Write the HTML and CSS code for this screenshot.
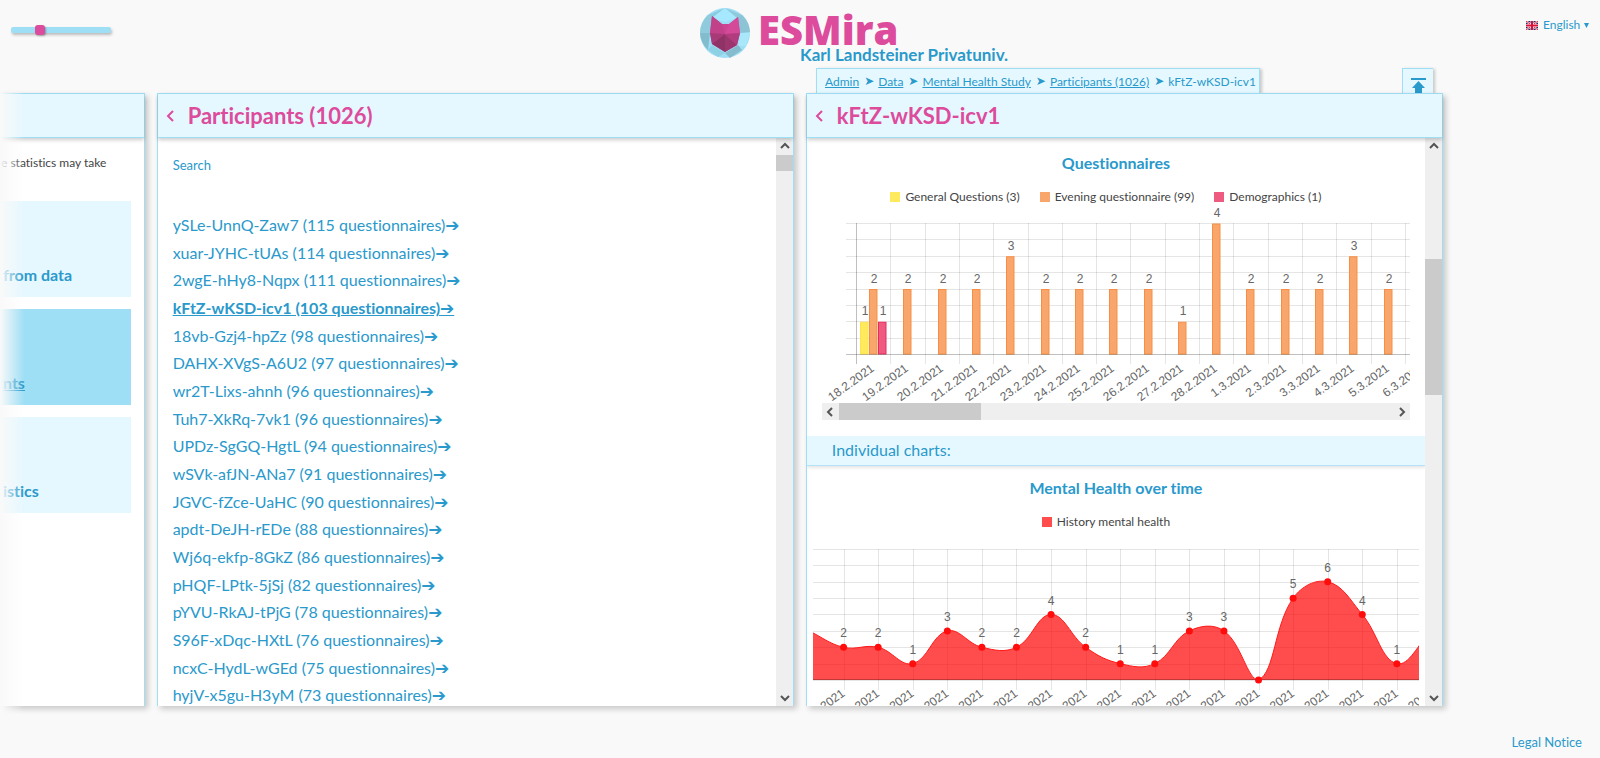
FILE: index.html
```html
<!DOCTYPE html>
<html lang="en">
<head>
<meta charset="utf-8">
<title>ESMira</title>
<link rel="stylesheet" href="styles.css">
</head>
<body>
<header class="top">
  <input class="zoom-slider" type="range" min="0" max="100" value="27" aria-label="Position">
  <div class="brand">
    <svg class="brand-icon" viewBox="0 0 50 50" aria-hidden="true">
      <circle cx="25" cy="25" r="25" fill="#9fdff5"/>
      <path d="M25 0 8 7 12 10z" fill="#8accdf"/>
      <path d="M25 0 42 7 37 13z" fill="#8fc9dc"/>
      <path d="M8 7A25 25 0 0 0 0 25L10 25 12 10z" fill="#8fcbdd"/>
      <path d="M42 7A25 25 0 0 1 50 24L40 25 38 10z" fill="#8cc4d6"/>
      <path d="M0 25 10 25 8 42A25 25 0 0 1 0 25z" fill="#83bccd"/>
      <path d="M50 25 40 25 38 38 46 38z" fill="#a9e8fb"/>
      <path d="M8 42 12 37 25 45 18 49z" fill="#8ed0e4"/>
      <path d="M42 42 38 37 25 45 30 50z" fill="#86bdce"/>
      <path d="M12 10 25 14 37 10 25 0z" fill="#a6e8fd"/>
      <path d="M12 8 22 16H29L38 9 40 25 37 37 25 44 12 36 10 25z" fill="#cb4592"/>
      <path d="M12 8 22 16 25 26 10 25z" fill="#c24289"/>
      <path d="M38 9 40 25 25 26 29 16z" fill="#d44a99"/>
      <path d="M10 25 25 26 12 36z" fill="#a83a78"/>
      <path d="M25 26 12 36 25 44z" fill="#8f3266"/>
      <path d="M25 26 37 37 25 44z" fill="#9c366f"/>
      <path d="M25 26 40 25 37 37z" fill="#b13d7f"/>
    </svg>
    <span class="brand-name">ESMira</span>
    <span class="brand-server">Karl Landsteiner Privatuniv.</span>
  </div>
  <label class="lang">
    <svg class="flag" viewBox="0 0 12 9" role="img" aria-label="Language">
      <path fill="#1f2f6e" d="M0 0h12v9H0z"/>
      <path stroke="#fff" stroke-width="2" d="M0 0l12 9M12 0 0 9"/>
      <path stroke="#d8203f" stroke-width="1" d="M0 0l12 9M12 0 0 9"/>
      <path stroke="#fff" stroke-width="3" d="M6 0v9M0 4.500h12"/>
      <path stroke="#d8103a" stroke-width="2" d="M6 0v9M0 4.500h12"/>
    </svg>
    <select class="lang-select"><option>English</option></select>
    <svg class="caret" viewBox="0 0 5 5" aria-hidden="true"><path d="M0 0h5L2.500 5z"/></svg>
  </label>
</header>

<div class="tabs">
  <nav class="crumbs" aria-label="Breadcrumb">
    <a href="#">Admin</a><span class="sep">➤</span><a href="#">Data</a><span class="sep">➤</span><a href="#">Mental Health Study</a><span class="sep">➤</span><a href="#">Participants (1026)</a><span class="sep">➤</span><span>kFtZ-wKSD-icv1</span>
  </nav>
  <button class="to-top" type="button" aria-label="Scroll to top">
    <svg viewBox="0 0 15 15" aria-hidden="true"><path d="M0 0h15v2H0zM7.500 3 14 10h-3v5H4v-5H1z"/></svg>
  </button>
</div>

<main class="boxes">
  <section class="box box-previous">
    <div class="box-head"></div>
    <div class="tiles">
      <p class="note">e statistics may take</p>
      <a class="tile" href="#"><span>from data</span></a>
      <a class="tile tile-current" href="#"><span>nts</span></a>
      <a class="tile" href="#"><span>istics</span></a>
    </div>
  </section>

  <section class="box">
    <div class="box-head">
      <button class="back" type="button" aria-label="Back"><svg viewBox="0 0 8 12"><path d="M7 1 2 6l5 5"/></svg></button>
      <h2>Participants (1026)</h2>
    </div>
    <div class="box-body">
      <div class="content list-content">
        <label class="search"><span>Search</span><input type="text"></label>
        <ul class="people">
          <li><a href="#">ySLe-UnnQ-Zaw7 (115 questionnaires)<i>➔</i></a></li>
          <li><a href="#">xuar-JYHC-tUAs (114 questionnaires)<i>➔</i></a></li>
          <li><a href="#">2wgE-hHy8-Nqpx (111 questionnaires)<i>➔</i></a></li>
          <li><a class="current" href="#">kFtZ-wKSD-icv1 (103 questionnaires)<i>➔</i></a></li>
          <li><a href="#">18vb-Gzj4-hpZz (98 questionnaires)<i>➔</i></a></li>
          <li><a href="#">DAHX-XVgS-A6U2 (97 questionnaires)<i>➔</i></a></li>
          <li><a href="#">wr2T-Lixs-ahnh (96 questionnaires)<i>➔</i></a></li>
          <li><a href="#">Tuh7-XkRq-7vk1 (96 questionnaires)<i>➔</i></a></li>
          <li><a href="#">UPDz-SgGQ-HgtL (94 questionnaires)<i>➔</i></a></li>
          <li><a href="#">wSVk-afJN-ANa7 (91 questionnaires)<i>➔</i></a></li>
          <li><a href="#">JGVC-fZce-UaHC (90 questionnaires)<i>➔</i></a></li>
          <li><a href="#">apdt-DeJH-rEDe (88 questionnaires)<i>➔</i></a></li>
          <li><a href="#">Wj6q-ekfp-8GkZ (86 questionnaires)<i>➔</i></a></li>
          <li><a href="#">pHQF-LPtk-5jSj (82 questionnaires)<i>➔</i></a></li>
          <li><a href="#">pYVU-RkAJ-tPjG (78 questionnaires)<i>➔</i></a></li>
          <li><a href="#">S96F-xDqc-HXtL (76 questionnaires)<i>➔</i></a></li>
          <li><a href="#">ncxC-HydL-wGEd (75 questionnaires)<i>➔</i></a></li>
          <li><a href="#">hyjV-x5gu-H3yM (73 questionnaires)<i>➔</i></a></li>
        </ul>
      </div>
      <div class="bar bar-v">
        <svg class="arrow" viewBox="0 0 17 17"><path d="M5 10l4-4 4 4"/></svg>
        <div class="track"><div class="thumb" style="height:3%"></div></div>
        <svg class="arrow" viewBox="0 0 17 17"><path d="M5 7l4 4 4-4"/></svg>
      </div>
    </div>
  </section>

  <section class="box">
    <div class="box-head">
      <button class="back" type="button" aria-label="Back"><svg viewBox="0 0 8 12"><path d="M7 1 2 6l5 5"/></svg></button>
      <h2>kFtZ-wKSD-icv1</h2>
    </div>
    <div class="box-body">
      <div class="content">
        <div class="chart-block">
          <h3>Questionnaires</h3>
          <ul class="legend">
            <li><span class="swatch yellow"></span>General Questions (3)</li>
            <li><span class="swatch orange"></span>Evening questionnaire (99)</li>
            <li><span class="swatch pink"></span>Demographics (1)</li>
          </ul>
          <svg class="chart chart-bars" id="bars" role="img" aria-label="Questionnaires"></svg>
          <div class="bar bar-h">
            <svg class="arrow" viewBox="0 0 17 17"><path d="M10 5 6 9l4 4"/></svg>
            <div class="track"><div class="thumb" style="width:25.600%"></div></div>
            <svg class="arrow" viewBox="0 0 17 17"><path d="M7 5l4 4-4 4"/></svg>
          </div>
        </div>
        <div class="divider">Individual charts:</div>
        <div class="chart-block chart-block-wide">
          <h3>Mental Health over time</h3>
          <ul class="legend">
            <li><span class="swatch red"></span>History mental health</li>
          </ul>
          <svg class="chart chart-line" id="line" role="img" aria-label="Mental Health over time"></svg>
        </div>
      </div>
      <div class="bar bar-v">
        <svg class="arrow" viewBox="0 0 17 17"><path d="M5 10l4-4 4 4"/></svg>
        <div class="track"><div style="height:19.500%"></div><div class="thumb" style="height:25.500%"></div></div>
        <svg class="arrow" viewBox="0 0 17 17"><path d="M5 7l4 4 4-4"/></svg>
      </div>
    </div>
  </section>
</main>

<footer class="foot"><a href="#">Legal Notice</a></footer>
<script src="charts.js"></script>
</body>
</html>
```
FILE: styles.css
```css
* { box-sizing: border-box; }

body {
  margin: 0;
  height: 100vh;
  display: flex;
  flex-direction: column;
  overflow: hidden;
  background: #f9f9f9;
  color: #444;
  font-family: "Trebuchet MS", Lato, sans-serif;
  font-size: 16px;
  font-variant-ligatures: none;
}

a { color: #2a99cb; text-decoration: none; }
ul { margin: 0; padding: 0; list-style: none; }
button { padding: 0; border: 0; background: none; cursor: pointer; }

/* header */
.top {
  display: grid;
  grid-template-columns: 1fr auto 1fr;
  height: 68px;
  flex: none;
}

.zoom-slider {
  appearance: none;
  width: 100px;
  height: 6px;
  margin: 27px 0 0 11px;
  border-radius: 2px;
  background: #9fdff5;
  box-shadow: 1px 2px 3px rgba(0, 0, 0, .25);
}
.zoom-slider::-webkit-slider-thumb {
  appearance: none;
  width: 10px;
  height: 10px;
  border-radius: 3px;
  background: #dd4b9c;
  box-shadow: 1px 1px 2px rgba(0, 0, 0, .3);
}

.brand {
  position: relative;
  display: flex;
  gap: 8px;
  width: 200px;
  padding-top: 8px;
}
.brand-icon { width: 50px; height: 50px; flex: none; }
.brand-name {
  color: #dd4b9c;
  font: 800 40px/44px "Open Sans", sans-serif;
}
.brand-server {
  position: absolute;
  top: 45px;
  left: 50%;
  color: #2a99cb;
  font-weight: bold;
  font-size: 17px;
  line-height: 20px;
  white-space: nowrap;
}

.lang {
  display: flex;
  justify-self: end;
  align-items: center;
  align-self: start;
  height: 20px;
  margin: 15px 11px 0 0;
}
.flag { width: 12px; height: 9px; margin-right: 5px; }
.lang-select {
  appearance: none;
  padding: 0;
  border: 0;
  background: none;
  color: #2a99cb;
  font: 12px/20px "Trebuchet MS", Lato, sans-serif;
}
.caret { width: 5px; height: 5px; margin-left: 3px; fill: #2a99cb; }

/* tabs above the last box */
.tabs {
  display: flex;
  flex: none;
  justify-content: space-between;
  width: calc(40% - 3px);
  height: 25px;
  margin: 0 157px 0 auto;
  padding: 0 10px;
}
.crumbs {
  display: flex;
  padding: 0 3px 0 8px;
  border: 1px solid #9fdff5;
  border-bottom: 0;
  background: #e5f8ff;
  box-shadow: 2px 1px 3px rgba(0, 0, 0, .2);
  color: #2a99cb;
  font-size: 12px;
  line-height: 25px;
  white-space: nowrap;
}
.crumbs a { text-decoration: underline; }
.sep { padding: 0 4px 0 5px; font-family: "DejaVu Sans", sans-serif; }
.to-top {
  width: 31px;
  padding-top: 9px;
  border: 1px solid #9fdff5;
  border-width: 1px 0 0 1px;
  background: #e5f8ff;
  box-shadow: 2px 1px 3px rgba(0, 0, 0, .2);
}
.to-top svg { display: block; width: 15px; height: 15px; margin: 0 auto; fill: #2a99cb; }

/* boxes */
.boxes {
  position: relative;
  display: flex;
  flex: 1;
  gap: 12px;
  min-height: 0;
  padding-right: 157px;
}
.boxes::before {
  content: "";
  position: absolute;
  inset: 0 auto -10px 0;
  z-index: 1;
  width: 24px;
  background: linear-gradient(to right, #f9f9f9, rgba(249, 249, 249, 0));
  pointer-events: none;
}
.box {
  display: flex;
  flex: 0 0 calc(40% + 60px);
  flex-direction: column;
  min-width: 0;
  border: 1px solid #9fdff5;
  border-bottom: 0;
  background: #fff;
  box-shadow: 3px 3px 6px rgba(0, 0, 0, .2);
}
.box-previous { flex: 1; border-left: 0; }
.box-head {
  z-index: 0;
  display: flex;
  flex: none;
  align-items: center;
  gap: 14px;
  height: 44px;
  padding-left: 8px;
  border-bottom: 1px solid #9fdff5;
  background: #e5f8ff;
  box-shadow: 0 2px 4px rgba(0, 0, 0, .2);
}
.box-head h2 { margin: 0; color: #dd4b9c; font-size: 22px; line-height: 28px; }
.back svg {
  display: block;
  width: 8px;
  height: 12px;
  fill: none;
  stroke: #dd4b9c;
  stroke-width: 2;
}
.box-body { display: flex; flex: 1; min-height: 0; }
.content { flex: 1; min-width: 0; overflow: hidden; }

.tiles { display: flex; flex-direction: column; gap: 12px; padding: 15px 13px 0 0; }
.note { margin: 0 0 16px 1px; font-size: 12px; line-height: 20px; white-space: nowrap; }
.tile {
  display: flex;
  align-items: flex-end;
  height: 96px;
  padding: 0 0 11px 3px;
  background: #e5f8ff;
  font-weight: bold;
  line-height: 22px;
}
.tile-current { background: #9fdff5; text-decoration: underline; }

/* participants */
.list-content { padding: 17px 15px 0; }
.search { display: flex; color: #2a99cb; font-size: 13px; line-height: 20px; }
.search input { flex: 1; border: 0; outline: 0; background: none; }
.people { display: grid; grid-auto-rows: 28px 27px 28px; margin-top: 36px; line-height: 28px; }
.people i { font: normal 17px/20px "DejaVu Sans", sans-serif; }
.people .current { font-weight: bold; text-decoration: underline; }

/* scroll bars */
.bar { display: flex; background: #efefef; }
.bar-v { flex-direction: column; width: 17px; }
.arrow { width: 17px; height: 17px; flex: none; fill: none; stroke: #555; stroke-width: 2; }
.track { display: flex; flex: 1; }
.bar-v .track { flex-direction: column; }
.thumb { background: #cbcbcb; }

/* charts */
.chart-block { padding: 15px 15px 16px; }
.chart-block-wide { padding: 12px 6px 0; }
.chart-block h3 { margin: 0; color: #2a99cb; font-size: 16px; line-height: 20px; text-align: center; }
.legend {
  display: flex;
  justify-content: center;
  margin-top: 14px;
  font-size: 12px;
  line-height: 20px;
}
.legend li { display: flex; align-items: center; gap: 5px; margin-right: 20px; }
.swatch { width: 10px; height: 10px; }
.yellow { background: #ffe95d; }
.orange { background: #f9a66c; }
.pink { background: #ee5a80; }
.red { background: #ff4d4d; }
.divider {
  height: 30px;
  padding-left: 25px;
  border-bottom: 1px solid #b5e3f5;
  background: #e5f8ff;
  box-shadow: 0 2px 3px rgba(0, 0, 0, .1);
  color: #2a99cb;
  line-height: 28px;
}
.chart { display: block; width: 100%; overflow: hidden; }
.chart-bars { height: 196px; }
.chart-line { height: 190px; }
.chart text { fill: #666; font: 12px "Liberation Sans", Arial, sans-serif; }
.chart .value { text-anchor: middle; }
.chart .date { text-anchor: end; }
.grid { stroke: rgba(0, 0, 0, .1); }
.axis { stroke: rgba(0, 0, 0, .25); }
.b-yellow { fill: #ffe95d; stroke: #ffe34d; }
.b-orange { fill: #f9a66c; stroke: #f68f45; }
.b-pink { fill: #ee5a80; stroke: #e82c5e; }
.area { fill: rgba(255, 0, 0, .7); }
.curve { fill: none; stroke: #ff1a1a; }
.dot { fill: #ff0d0d; }

.foot {
  flex: none;
  height: 52px;
  padding: 26px 18px 0 0;
  font-size: 13px;
  line-height: 20px;
  text-align: right;
}
```
FILE: charts.js
```js
const NS = "http://www.w3.org/2000/svg";

function add(svg, name, attrs, text) {
  const el = document.createElementNS(NS, name);
  for (const key in attrs) el.setAttribute(key, attrs[key]);
  if (text !== undefined) el.textContent = text;
  svg.appendChild(el);
}

function hline(svg, x1, x2, y, cls) {
  add(svg, "line", { x1, x2, y1: y + 0.5, y2: y + 0.5, class: cls });
}

function vline(svg, x, y1, y2, cls) {
  add(svg, "line", { x1: x + 0.5, x2: x + 0.5, y1, y2, class: cls });
}

function date(svg, x, y, text) {
  add(svg, "text", { class: "date", transform: `translate(${x} ${y}) rotate(-36)` }, text);
}

function drawBars() {
  const svg = document.getElementById("bars");
  const left = 34, top = 16, bottom = 147, step = 34.3, unit = 32.75;
  const days = [
    ["18.2.2021", 2], ["19.2.2021", 2], ["20.2.2021", 2], ["21.2.2021", 2],
    ["22.2.2021", 3], ["23.2.2021", 2], ["24.2.2021", 2], ["25.2.2021", 2],
    ["26.2.2021", 2], ["27.2.2021", 1], ["28.2.2021", 4], ["1.3.2021", 2],
    ["2.3.2021", 2], ["3.3.2021", 2], ["4.3.2021", 3], ["5.3.2021", 2], ["6.3.2021", 0]
  ];
  for (let i = 0; i < 8; i++) hline(svg, left - 10, 2000, Math.round(top + i * unit / 2), "grid");
  days.forEach((d, i) => { if (i) vline(svg, Math.round(left + i * step), top, bottom + 10, "grid"); });

  const bar = (x, value, cls) => {
    const y = bottom - value * unit;
    add(svg, "rect", { x: x - 3.5, y: y + 1, width: 7.5, height: value * unit - 1, class: cls });
    add(svg, "text", { x: x + 1, y: y - 6, class: "value" }, value);
  };
  days.forEach(([label, value], i) => {
    const x = Math.round(left + (i + 0.5) * step);
    if (i === 0) {
      bar(x - 9, 1, "b-yellow");
      bar(x + 9, 1, "b-pink");
    }
    if (value) bar(x, value, "b-orange");
    date(svg, x + 2, bottom + 16, label);
  });
  hline(svg, left - 10, 2000, bottom, "axis");
  vline(svg, left, top, bottom + 10, "axis");
}

function drawLine() {
  const svg = document.getElementById("line");
  const top = 17, bottom = 148, step = 34.58, unit = 16.37, first = -4;
  const values = [3, 2, 2, 1, 3, 2, 2, 4, 2, 1, 1, 3, 3, 0, 5, 6, 4, 1, 3];
  const pts = values.map((v, i) => ({ x: first + i * step, y: bottom - v * unit, v }));

  for (let i = 0; i < 9; i++) hline(svg, 0, 2000, Math.round(top + i * unit), "grid");
  pts.forEach(p => vline(svg, Math.round(p.x), top, bottom + 10, "grid"));

  const clamp = y => Math.min(bottom, Math.max(top, y));
  const controls = pts.map((p, i) => {
    const a = pts[i - 1] || p, b = pts[i + 1] || p;
    const d1 = Math.hypot(p.x - a.x, p.y - a.y), d2 = Math.hypot(b.x - p.x, b.y - p.y);
    const f1 = 0.4 * d1 / (d1 + d2), f2 = 0.4 * d2 / (d1 + d2);
    return {
      before: [p.x - f1 * (b.x - a.x), clamp(p.y - f1 * (b.y - a.y))],
      after: [p.x + f2 * (b.x - a.x), clamp(p.y + f2 * (b.y - a.y))]
    };
  });
  let path = `M${pts[0].x} ${pts[0].y}`;
  for (let i = 1; i < pts.length; i++) {
    path += `C${controls[i - 1].after} ${controls[i].before} ${pts[i].x} ${pts[i].y}`;
  }
  const end = pts[pts.length - 1].x;
  add(svg, "path", { d: `${path}L${end} ${bottom}L${first} ${bottom}Z`, class: "area" });
  add(svg, "path", { d: path, class: "curve" });
  hline(svg, 0, end, bottom - 1, "axis");
  pts.forEach(p => {
    add(svg, "circle", { cx: p.x, cy: p.y, r: 3.5, class: "dot" });
    if (p.v) add(svg, "text", { x: p.x, y: p.y - 10, class: "value" }, p.v);
    if (p.x > 0) date(svg, p.x + 2, bottom + 15, ".2021");
  });
}

drawBars();
drawLine();
```
